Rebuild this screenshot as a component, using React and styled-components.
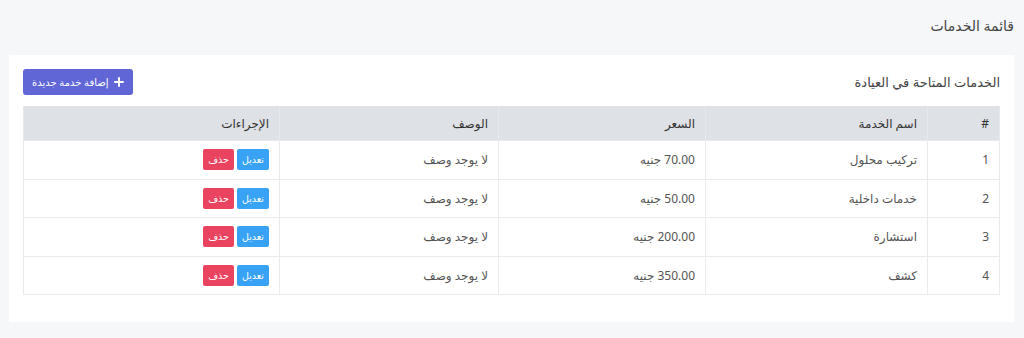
import React from 'react'
import styled, { createGlobalStyle } from 'styled-components'

const GlobalStyle = createGlobalStyle`
  html, body {
    margin: 0;
    padding: 0;
    background: #f6f7f9;
  }
  body {
    font-family: 'Noto Sans', 'DejaVu Sans', sans-serif;
    color: #333;
  }
`

const Page = styled.div`
  direction: rtl;
  width: 1024px;
  height: 338px;
  padding: 0 10px 0 10px;
  box-sizing: border-box;
`

const PageTitle = styled.h1`
  margin: 0;
  height: 55px;
  display: flex;
  align-items: center;
  padding: 0 0 4px 0;
  box-sizing: border-box;
  font-size: 14px;
  font-weight: 400;
  color: #444;
`

const Card = styled.section`
  background: #fff;
  padding: 14px 14px 27px;
  margin-left: -1px;
`

const CardHeader = styled.div`
  display: flex;
  align-items: center;
  justify-content: space-between;
  height: 26px;
  margin-bottom: 11px;
`

const CardTitle = styled.h2`
  margin: 0;
  font-size: 13px;
  font-weight: 400;
  color: #444;
`

const AddButton = styled.button`
  display: flex;
  align-items: center;
  gap: 5px;
  height: 26px;
  padding: 0 9px;
  border: none;
  border-radius: 3px;
  background: #6166d6;
  color: #fff;
  font-family: inherit;
  font-size: 10px;
  cursor: pointer;
`

const Table = styled.table`
  width: 100%;
  border-collapse: collapse;
  table-layout: fixed;
  font-size: 12px;
`

const Th = styled.th`
  background: #dee1e5;
  height: 34px;
  padding: 0 10px;
  text-align: right;
  font-weight: 400;
  color: #333;
  border: 1px solid #e6e8eb;
  border-top: none;
`

const Td = styled.td`
  height: 37.5px;
  padding: 0 10px;
  text-align: right;
  color: #555;
  border: 1px solid #e9ebee;
`

const Actions = styled.div`
  display: flex;
  gap: 3px;
`

const SmallButton = styled.button`
  height: 21px;
  padding: 0 5px;
  border: none;
  border-radius: 2px;
  background: ${(p) => (p.$variant === 'danger' ? '#e9435f' : '#38a3f5')};
  color: #fff;
  font-family: inherit;
  font-size: 9.5px;
  cursor: pointer;
`

const services = [
  { id: 1, name: 'تركيب محلول', price: '70.00' },
  { id: 2, name: 'خدمات داخلية', price: '50.00' },
  { id: 3, name: 'استشارة', price: '200.00' },
  { id: 4, name: 'كشف', price: '350.00' },
]

const PlusIcon = () => (
  <svg width='10' height='10' viewBox='0 0 10 10'>
    <path d='M5 1v8M1 5h8' stroke='#fff' strokeWidth='2' strokeLinecap='round' />
  </svg>
)

const App = () => {
  return (
    <Page>
      <GlobalStyle />
      <PageTitle>قائمة الخدمات</PageTitle>
      <Card>
        <CardHeader>
          <CardTitle>الخدمات المتاحة في العيادة</CardTitle>
          <AddButton>
            <PlusIcon />
            إضافة خدمة جديدة
          </AddButton>
        </CardHeader>
        <Table>
          <colgroup>
            <col style={{ width: '72px' }} />
            <col style={{ width: '222px' }} />
            <col style={{ width: '207px' }} />
            <col style={{ width: '219px' }} />
            <col />
          </colgroup>
          <thead>
            <tr>
              <Th>#</Th>
              <Th>اسم الخدمة</Th>
              <Th>السعر</Th>
              <Th>الوصف</Th>
              <Th>الإجراءات</Th>
            </tr>
          </thead>
          <tbody>
            {services.map((item) => (
              <tr key={item.id}>
                <Td>{item.id}</Td>
                <Td>{item.name}</Td>
                <Td>{item.price} جنيه</Td>
                <Td>لا يوجد وصف</Td>
                <Td>
                  <Actions>
                    <SmallButton>تعديل</SmallButton>
                    <SmallButton $variant='danger'>حذف</SmallButton>
                  </Actions>
                </Td>
              </tr>
            ))}
          </tbody>
        </Table>
      </Card>
    </Page>
  )
}

export default App
